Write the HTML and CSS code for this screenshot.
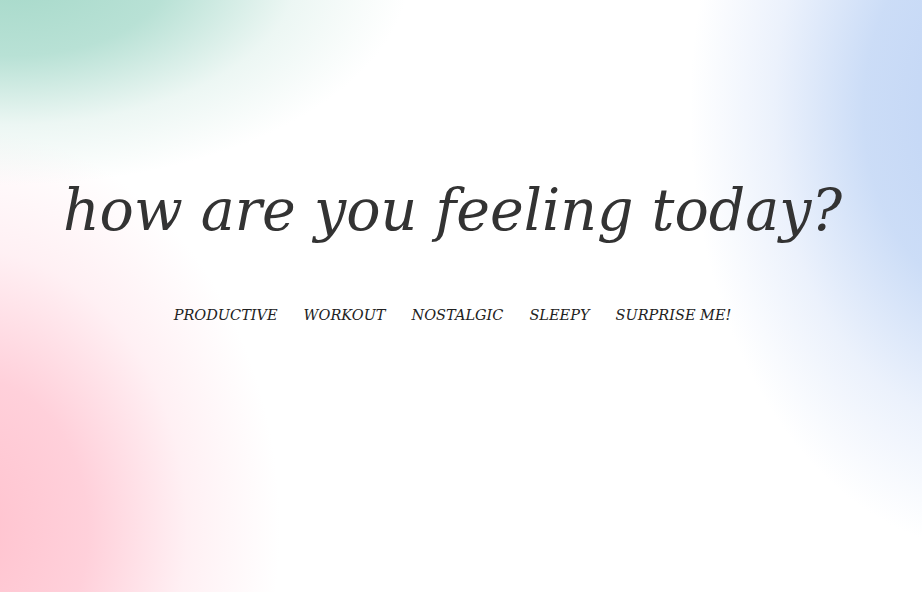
FILE: index.html
```html
<!DOCTYPE html>
<html lang="en">
<head>
<meta charset="utf-8">
<title>how are you feeling today?</title>
<link rel="stylesheet" href="styles.css">
</head>
<body>
<main class="page">
  <h1 class="title">how are you feeling today?</h1>
  <nav class="moods">
    <button class="mood">PRODUCTIVE</button>
    <button class="mood">WORKOUT</button>
    <button class="mood">NOSTALGIC</button>
    <button class="mood">SLEEPY</button>
    <button class="mood">SURPRISE ME!</button>
  </nav>
</main>
</body>
</html>
```
FILE: styles.css
```css
html, body {
  margin: 0;
  padding: 0;
  height: 100%;
}
body {
  background-color: #ffffff;
  background-image:
    radial-gradient(ellipse 400px 215px at 10px -30px, rgba(164,216,200,1) 0%, rgba(172,220,206,0.85) 40%, rgba(208,234,226,0.4) 72%, rgba(255,255,255,0) 100%),
    radial-gradient(ellipse 310px 400px at -30px 530px, rgba(255,194,206,1) 0%, rgba(255,200,212,0.85) 38%, rgba(255,222,230,0.45) 70%, rgba(255,255,255,0) 100%),
    radial-gradient(ellipse 300px 440px at 990px 110px, rgba(192,212,245,1) 0%, rgba(198,217,246,0.9) 42%, rgba(216,228,249,0.5) 72%, rgba(255,255,255,0) 100%);
  background-repeat: no-repeat;
  font-family: "DejaVu Serif", "Liberation Serif", serif;
  overflow: hidden;
}
.page {
  height: 100%;
  box-sizing: border-box;
  padding: 172px 17px 0 0;
  display: flex;
  flex-direction: column;
  align-items: center;
}
.title {
  margin: 0;
  font-style: italic;
  font-weight: normal;
  font-size: 57px;
  line-height: 76px;
  color: #333333;
}
.moods {
  display: flex;
  gap: 26px;
  margin-top: 57px;
}
.mood {
  border: none;
  background: none;
  padding: 0;
  font-family: "DejaVu Serif", "Liberation Serif", serif;
  font-style: italic;
  font-size: 14.5px;
  line-height: 20px;
  color: #222222;
  cursor: pointer;
}
```
